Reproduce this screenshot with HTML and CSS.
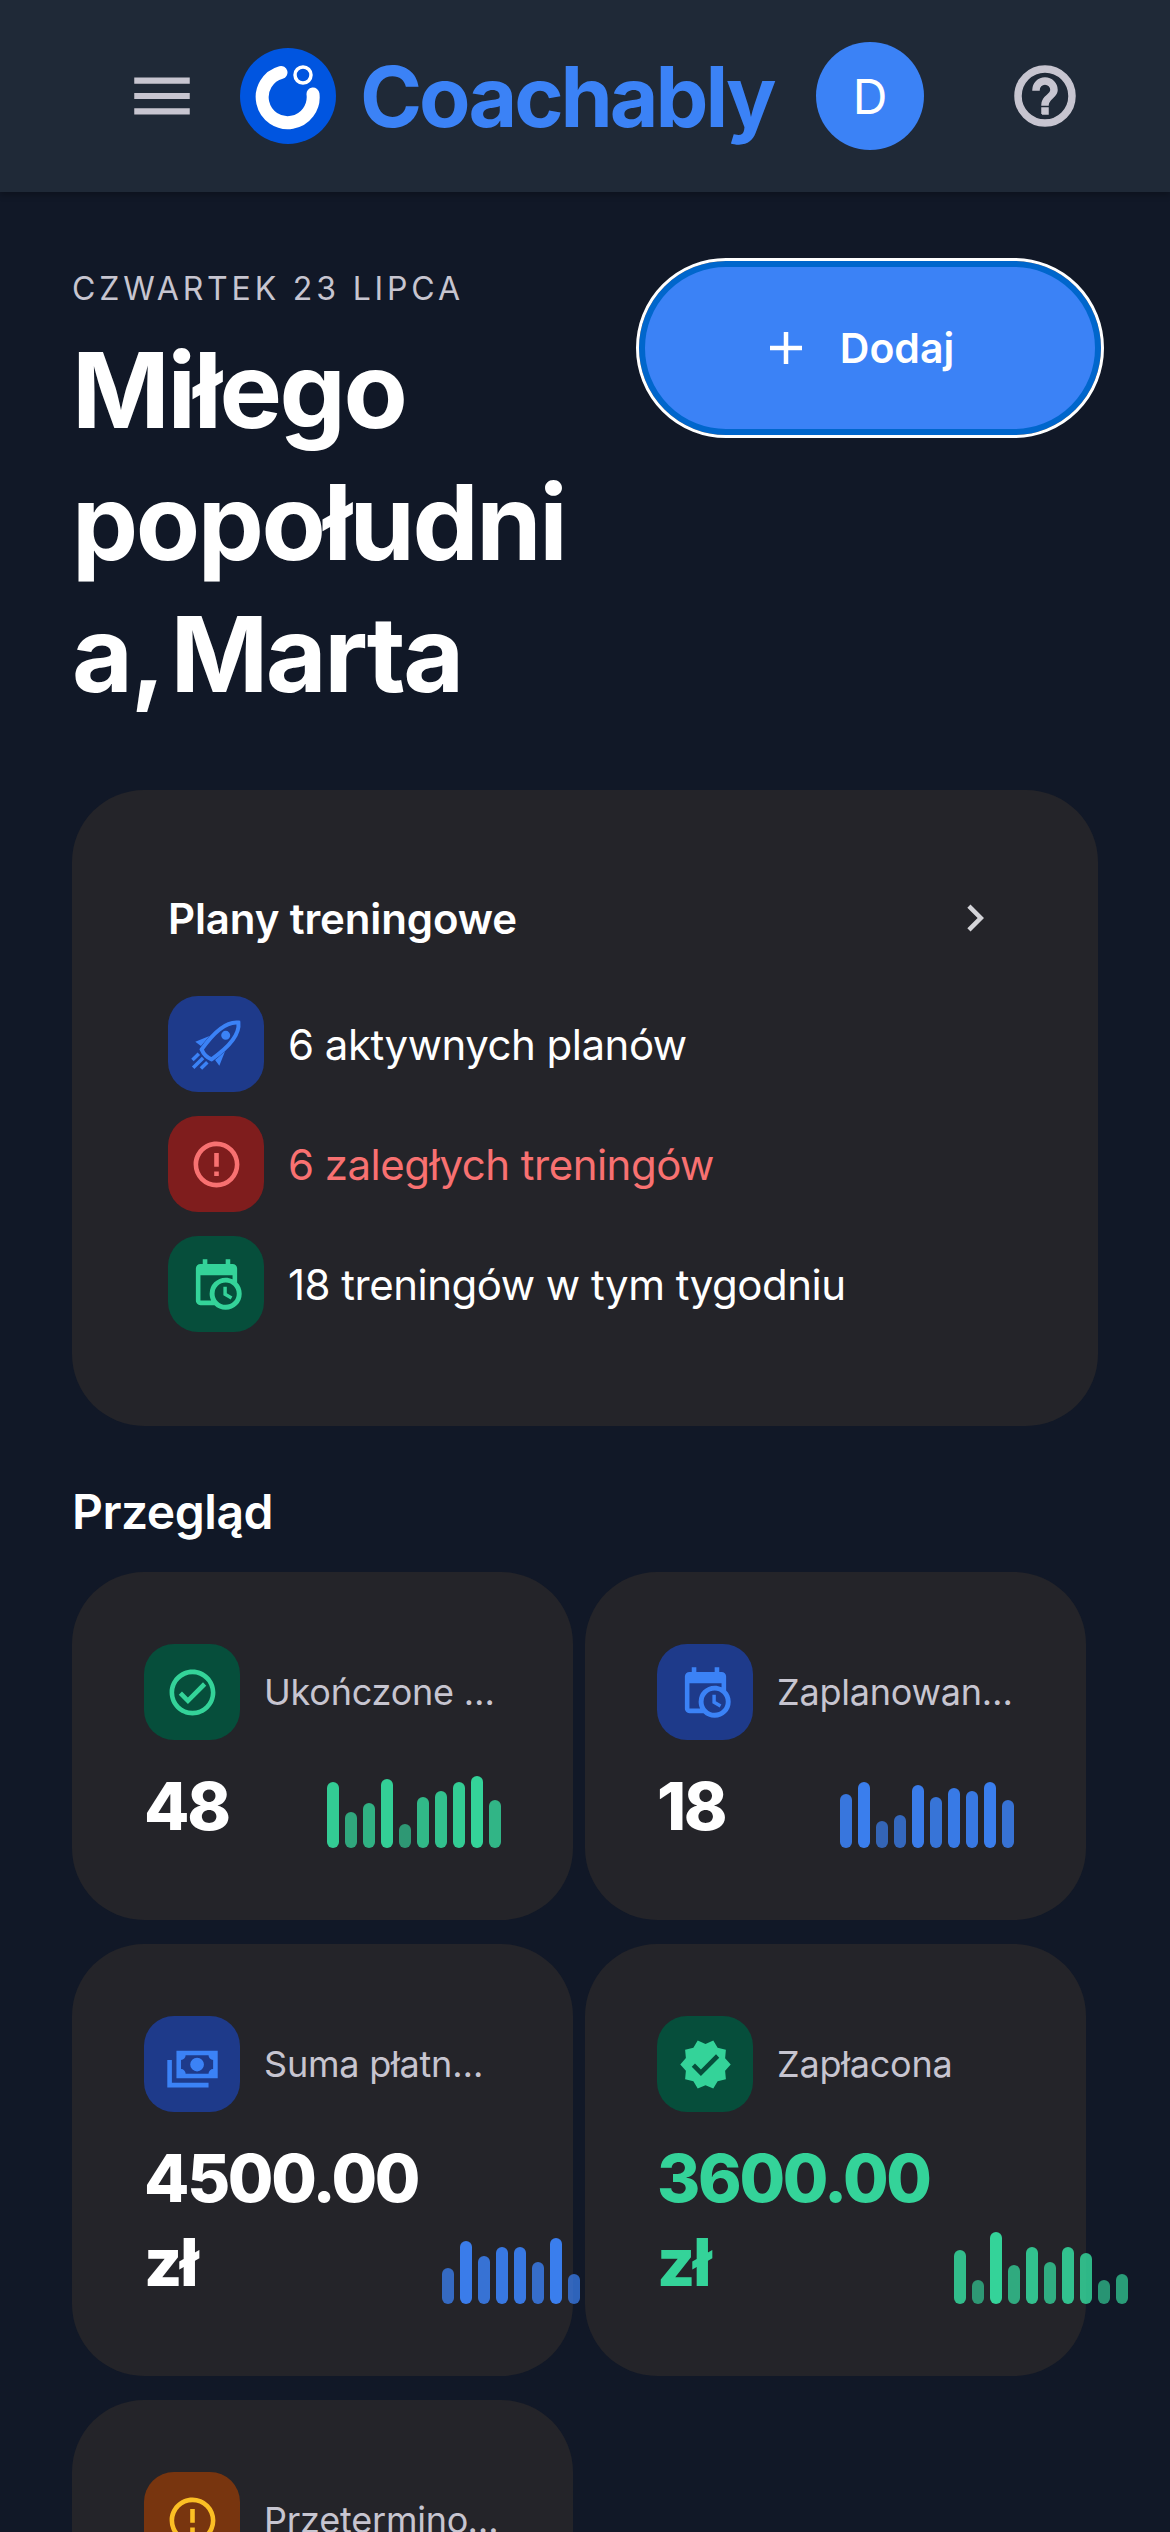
FILE: index.html
```html
<!DOCTYPE html>
<html lang="pl">
<head>
    <meta charset="UTF-8">
    <meta name="viewport" content="width=device-width, initial-scale=1.0">
    <title>Coachably</title>
    <link rel="stylesheet" href="styles.css">
</head>
<body>
<header class="topbar">
    <svg class="menu-icon" viewBox="0 0 24 24"><path d="M3,6H21V8H3V6M3,11H21V13H3V11M3,16H21V18H3V16Z"/></svg>
    <svg class="logo" viewBox="0 0 96 96">
        <circle cx="48" cy="48" r="48" fill="#0055e0"/>
        <path d="M41 24.5A25.5 25.5 0 1 0 73 46" fill="none" stroke="#fff" stroke-width="13" stroke-linecap="round"/>
        <circle cx="63" cy="27" r="8" fill="none" stroke="#fff" stroke-width="3.5"/>
    </svg>
    <span class="brand">Coachably</span>
    <div class="avatar">D</div>
    <svg class="help-icon" viewBox="0 0 24 24"><path d="M11,18H13V16H11V18M12,2A10,10 0 0,0 2,12A10,10 0 0,0 12,22A10,10 0 0,0 22,12A10,10 0 0,0 12,2M12,20C7.59,20 4,16.41 4,12C4,7.59 7.59,4 12,4C16.41,4 20,7.59 20,12C20,16.41 16.41,20 12,20M12,6A4,4 0 0,0 8,10H10A2,2 0 0,1 12,8A2,2 0 0,1 14,10C14,12 11,11.75 11,15H13C13,12.75 16,12.5 16,10A4,4 0 0,0 12,6Z"/></svg>
</header>

<main class="page">
    <section class="greeting-row">
        <div class="greeting">
            <div class="date">Czwartek 23 lipca</div>
            <h1>Miłego popołudnia, Marta</h1>
        </div>
        <button class="add-button">
            <svg viewBox="0 0 48 48"><path d="M24 8V40M8 24H40" fill="none" stroke="#fff" stroke-width="4.5"/></svg>
            <span>Dodaj</span>
        </button>
    </section>

    <section class="plans-card">
        <div class="plans-head">
            <h2>Plany treningowe</h2>
            <svg viewBox="0 0 24 24"><path d="M8.59,16.58L13.17,12L8.59,7.41L10,6L16,12L10,18L8.59,16.58Z"/></svg>
        </div>
        <div class="plans-list">
            <div class="plan-row">
                <div class="icon-box blue">
                    <svg viewBox="20.5 20.5 55 55">
                        <g transform="rotate(45 48 48)">
                            <path d="M48 17C57 24 59 39 55 62Q48 65 41 62C37 39 39 24 48 17Z" fill="none" stroke="#3b82f6" stroke-width="4"/>
                            <circle cx="48" cy="35" r="4.5"/>
                            <path d="M31 61L37 47L38 60Z M65 61L59 47L58 60Z"/>
                            <path d="M42 67V76M48 67V81M54 67V76" fill="none" stroke="#3b82f6" stroke-width="3.5"/>
                        </g>
                    </svg>
                </div>
                <span>6 aktywnych planów</span>
            </div>
            <div class="plan-row overdue">
                <div class="icon-box red"><svg viewBox="0 0 24 24"><path d="M11,15H13V17H11V15M11,7H13V13H11V7M12,2C6.47,2 2,6.5 2,12A10,10 0 0,0 12,22A10,10 0 0,0 22,12A10,10 0 0,0 12,2M12,20A8,8 0 0,1 4,12A8,8 0 0,1 12,4A8,8 0 0,1 20,12A8,8 0 0,1 12,20Z"/></svg></div>
                <span>6 zaległych treningów</span>
            </div>
            <div class="plan-row">
                <div class="icon-box green"><svg viewBox="0 0 24 24"><path d="M15,13H16.5V15.82L18.94,17.23L18.19,18.53L15,16.69V13M19,8H5V19H9.67C9.24,18.09 9,17.07 9,16A7,7 0 0,1 16,9C17.07,9 18.09,9.24 19,9.67V8M5,21C3.89,21 3,20.1 3,19V5C3,3.89 3.89,3 5,3H6V1H8V3H16V1H18V3H19A2,2 0 0,1 21,5V11.1C22.24,12.36 23,14.09 23,16A7,7 0 0,1 16,23C14.09,23 12.36,22.24 11.1,21H5M16,11.15A4.85,4.85 0 0,0 11.15,16C11.15,18.68 13.32,20.85 16,20.85A4.85,4.85 0 0,0 20.85,16C20.85,13.32 18.68,11.15 16,11.15Z"/></svg></div>
                <span>18 treningów w tym tygodniu</span>
            </div>
        </div>
    </section>

    <h2 class="section-title">Przegląd</h2>

    <section class="stats-grid">
        <article class="stat-card">
            <div class="stat-head">
                <div class="icon-box green"><svg viewBox="0 0 24 24"><path d="M12 2C6.5 2 2 6.5 2 12S6.5 22 12 22 22 17.5 22 12 17.5 2 12 2M12 20C7.59 20 4 16.41 4 12S7.59 4 12 4 20 7.59 20 12 16.41 20 12 20M16.59 7.58L10 14.17L7.41 11.59L6 13L10 17L18 9L16.59 7.58Z"/></svg></div>
                <span class="stat-label">Ukończone treningi</span>
            </div>
            <div class="stat-body">
                <div class="stat-value">48</div>
                <div class="spark green-bars">
                    <i style="height:66px;opacity:.96"></i><i style="height:36px;opacity:.75"></i><i style="height:45px;opacity:.81"></i><i style="height:69px;opacity:.98"></i><i style="height:24px;opacity:.67"></i><i style="height:51px;opacity:.85"></i><i style="height:57px;opacity:.9"></i><i style="height:66px;opacity:.96"></i><i style="height:72px;opacity:1"></i><i style="height:48px;opacity:.83"></i>
                </div>
            </div>
        </article>
        <article class="stat-card">
            <div class="stat-head">
                <div class="icon-box blue"><svg viewBox="0 0 24 24"><path d="M15,13H16.5V15.82L18.94,17.23L18.19,18.53L15,16.69V13M19,8H5V19H9.67C9.24,18.09 9,17.07 9,16A7,7 0 0,1 16,9C17.07,9 18.09,9.24 19,9.67V8M5,21C3.89,21 3,20.1 3,19V5C3,3.89 3.89,3 5,3H6V1H8V3H16V1H18V3H19A2,2 0 0,1 21,5V11.1C22.24,12.36 23,14.09 23,16A7,7 0 0,1 16,23C14.09,23 12.36,22.24 11.1,21H5M16,11.15A4.85,4.85 0 0,0 11.15,16C11.15,18.68 13.32,20.85 16,20.85A4.85,4.85 0 0,0 20.85,16C20.85,13.32 18.68,11.15 16,11.15Z"/></svg></div>
                <span class="stat-label">Zaplanowane treningi</span>
            </div>
            <div class="stat-body">
                <div class="stat-value">18</div>
                <div class="spark blue-bars">
                    <i style="height:54px;opacity:.88"></i><i style="height:66px;opacity:.96"></i><i style="height:27px;opacity:.69"></i><i style="height:33px;opacity:.73"></i><i style="height:63px;opacity:.94"></i><i style="height:51px;opacity:.85"></i><i style="height:60px;opacity:.92"></i><i style="height:57px;opacity:.9"></i><i style="height:66px;opacity:.96"></i><i style="height:48px;opacity:.83"></i>
                </div>
            </div>
        </article>
        <article class="stat-card">
            <div class="stat-head">
                <div class="icon-box blue"><svg viewBox="0 0 24 24"><path d="M5,6H23V18H5V6M14,9A3,3 0 0,1 17,12A3,3 0 0,1 14,15A3,3 0 0,1 11,12A3,3 0 0,1 14,9M9,8A2,2 0 0,1 7,10V14A2,2 0 0,1 9,16H19A2,2 0 0,1 21,14V10A2,2 0 0,1 19,8H9M1,10H3V20H19V22H1V10Z"/></svg></div>
                <span class="stat-label">Suma płatności</span>
            </div>
            <div class="stat-body">
                <div class="stat-value">4500.00 zł</div>
                <div class="spark blue-bars">
                    <i style="height:36px;opacity:.75"></i><i style="height:63px;opacity:.94"></i><i style="height:48px;opacity:.83"></i><i style="height:57px;opacity:.9"></i><i style="height:57px;opacity:.9"></i><i style="height:42px;opacity:.79"></i><i style="height:66px;opacity:.96"></i><i style="height:30px;opacity:.71"></i>
                </div>
            </div>
        </article>
        <article class="stat-card">
            <div class="stat-head">
                <div class="icon-box green"><svg viewBox="0 0 24 24"><path d="M23,12L20.56,9.22L20.9,5.54L17.29,4.72L15.4,1.54L12,3L8.6,1.54L6.71,4.72L3.1,5.53L3.44,9.21L1,12L3.44,14.78L3.1,18.47L6.71,19.29L8.6,22.47L12,21L15.4,22.46L17.29,19.28L20.9,18.46L20.56,14.78L23,12M10,17L6,13L7.41,11.59L10,14.17L16.59,7.58L18,9L10,17Z"/></svg></div>
                <span class="stat-label">Zapłacona</span>
            </div>
            <div class="stat-body">
                <div class="stat-value paid">3600.00 zł</div>
                <div class="spark green-bars">
                    <i style="height:54px;opacity:.88"></i><i style="height:24px;opacity:.67"></i><i style="height:72px;opacity:1"></i><i style="height:39px;opacity:.77"></i><i style="height:57px;opacity:.9"></i><i style="height:42px;opacity:.79"></i><i style="height:57px;opacity:.9"></i><i style="height:51px;opacity:.85"></i><i style="height:24px;opacity:.67"></i><i style="height:30px;opacity:.71"></i>
                </div>
            </div>
        </article>
        <article class="stat-card">
            <div class="stat-head">
                <div class="icon-box amber"><svg viewBox="0 0 24 24"><path d="M11,15H13V17H11V15M11,7H13V13H11V7M12,2C6.47,2 2,6.5 2,12A10,10 0 0,0 12,22A10,10 0 0,0 22,12A10,10 0 0,0 12,2M12,20A8,8 0 0,1 4,12A8,8 0 0,1 12,4A8,8 0 0,1 20,12A8,8 0 0,1 12,20Z"/></svg></div>
                <span class="stat-label">Przeterminowane płatności</span>
            </div>
        </article>
    </section>
</main>
</body>
</html>
```

FILE: styles.css
```css
html, body {
    height: 100%;
    overflow: hidden;
}
body {
    margin: 0;
    background: #111827;
    color: #fff;
    font-family: 'Inter', 'Liberation Sans', sans-serif;
}
.topbar {
    height: 192px;
    box-sizing: border-box;
    display: flex;
    align-items: center;
    padding-left: 125px;
    background: #1f2937;
    box-shadow: 0 3px 6px rgba(0, 0, 0, 0.25);
}
.menu-icon {
    width: 74px;
    height: 74px;
    fill: #c7c5d0;
}
.logo {
    width: 96px;
    height: 96px;
    margin-left: 41px;
}
.brand {
    margin-left: 24px;
    width: 430px;
    font-size: 84px;
    font-weight: 700;
    letter-spacing: -0.036em;
    color: #3b82f6;
    white-space: nowrap;
}
.avatar {
    width: 108px;
    height: 108px;
    margin-left: 26px;
    border-radius: 50%;
    background: #3b82f6;
    display: flex;
    align-items: center;
    justify-content: center;
    font-size: 48px;
}
.help-icon {
    width: 72px;
    height: 72px;
    margin-left: 85px;
    fill: #c7c5d0;
    stroke: #c7c5d0;
    stroke-width: 0.5;
}
.page {
    padding: 66px 72px 0;
}
.greeting-row {
    display: flex;
    gap: 48px;
    align-items: flex-start;
}
.greeting {
    width: 516px;
    flex-shrink: 0;
}
.date {
    font-size: 32px;
    line-height: 62px;
    letter-spacing: 0.12em;
    text-transform: uppercase;
    color: #c7c5d0;
}
h1 {
    margin: 4px 0 0;
    font-size: 105px;
    line-height: 132px;
    font-weight: 700;
    letter-spacing: -0.023em;
    word-spacing: -12px;
    overflow-wrap: anywhere;
}
.add-button {
    width: 462px;
    height: 174px;
    margin: 3px;
    flex-shrink: 0;
    box-sizing: border-box;
    border: 6px solid #0066cc;
    outline: 3px solid #fff;
    border-radius: 87px;
    background: #3b82f6;
    color: #fff;
    display: flex;
    align-items: center;
    justify-content: center;
    gap: 30px;
    padding: 0 24px 0 0;
    font-family: inherit;
    font-size: 41px;
    font-weight: 600;
}
.add-button svg {
    width: 48px;
    height: 48px;
}
.plans-card {
    margin-top: 70px;
    padding: 96px 96px 94px;
    border-radius: 72px;
    background: #242429;
}
.plans-head {
    height: 64px;
    display: flex;
    align-items: center;
    justify-content: space-between;
}
.plans-head h2 {
    margin: 0;
    font-size: 42px;
    font-weight: 600;
    letter-spacing: -0.003em;
}
.plans-head svg {
    width: 54px;
    height: 54px;
    fill: #d4d4d8;
}
.plans-list {
    margin-top: 46px;
    display: flex;
    flex-direction: column;
    gap: 24px;
}
.plan-row {
    display: flex;
    align-items: center;
    gap: 24px;
    font-size: 42px;
    letter-spacing: -0.012em;
}
.overdue {
    color: #f87171;
}
.icon-box {
    width: 96px;
    height: 96px;
    flex-shrink: 0;
    border-radius: 30px;
    display: flex;
    align-items: center;
    justify-content: center;
}
.icon-box svg {
    width: 55px;
    height: 55px;
}
.blue {
    background: #1e3a8a;
    fill: #3b82f6;
}
.red {
    background: #7f1d1d;
    fill: #f87171;
}
.green {
    background: #064e3b;
    fill: #34d399;
}
.amber {
    background: #78350f;
    fill: #fbbf24;
}
.section-title {
    margin: 50px 0 24px;
    font-size: 48px;
    line-height: 72px;
    font-weight: 600;
    letter-spacing: -0.01em;
}
.stats-grid {
    display: grid;
    grid-template-columns: 501px 501px;
    gap: 24px 12px;
}
.stat-card {
    padding: 72px;
    border-radius: 72px;
    background: #242429;
}
.stat-head {
    display: flex;
    align-items: center;
    gap: 24px;
}
.stat-label {
    min-width: 0;
    font-size: 36px;
    letter-spacing: -0.006em;
    color: #c7c5d0;
    white-space: nowrap;
    overflow: hidden;
    text-overflow: ellipsis;
}
.stat-body {
    margin-top: 24px;
    display: flex;
    align-items: flex-end;
    justify-content: space-between;
    gap: 24px;
}
.stat-value {
    font-size: 66px;
    line-height: 84px;
    font-weight: 800;
    letter-spacing: -0.035em;
}
.paid {
    color: #34d399;
}
.spark {
    display: flex;
    align-items: flex-end;
    gap: 6px;
    height: 72px;
    flex-shrink: 0;
}
.spark i {
    display: block;
    width: 12px;
    border-radius: 6px;
}
.green-bars i {
    background: #34d399;
}
.blue-bars i {
    background: #3b82f6;
}
```
